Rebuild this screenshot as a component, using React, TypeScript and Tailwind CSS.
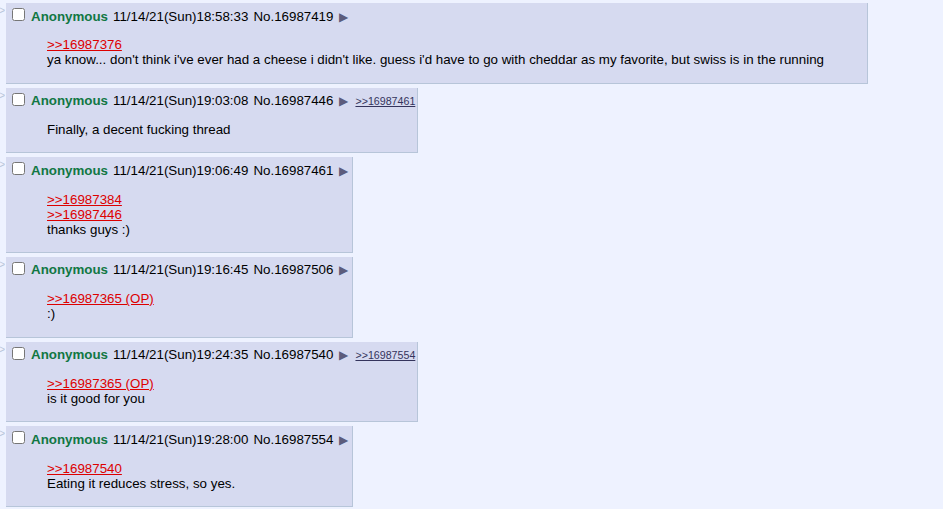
import React from 'react';

type Post = {
    time: string;
    no: string;
    backlinks?: string[];
    quotes: string[];
    lines: string[];
};

const posts: Post[] = [
    {
        time: '11/14/21(Sun)18:58:33',
        no: '16987419',
        quotes: ['>>16987376'],
        lines: ["ya know... don't think i've ever had a cheese i didn't like. guess i'd have to go with cheddar as my favorite, but swiss is in the running"],
    },
    {
        time: '11/14/21(Sun)19:03:08',
        no: '16987446',
        backlinks: ['>>16987461'],
        quotes: [],
        lines: ['Finally, a decent fucking thread'],
    },
    {
        time: '11/14/21(Sun)19:06:49',
        no: '16987461',
        quotes: ['>>16987384', '>>16987446'],
        lines: ['thanks guys :)'],
    },
    {
        time: '11/14/21(Sun)19:16:45',
        no: '16987506',
        quotes: ['>>16987365 (OP)'],
        lines: [':)'],
    },
    {
        time: '11/14/21(Sun)19:24:35',
        no: '16987540',
        backlinks: ['>>16987554'],
        quotes: ['>>16987365 (OP)'],
        lines: ['is it good for you'],
    },
    {
        time: '11/14/21(Sun)19:28:00',
        no: '16987554',
        quotes: ['>>16987540'],
        lines: ['Eating it reduces stress, so yes.'],
    },
];

function Reply({ post }: { post: Post }) {
    return (
        <div className="flex items-start">
            <div className="flex w-[5px] shrink-0 justify-end overflow-hidden pt-[3px] text-[10px] leading-none text-[#B7C5D9]">
                <span>&gt;&gt;</span>
            </div>
            <div className="ml-[1px] border-r border-b border-[#B7C5D9] bg-[#D6DAF0] py-[2px] pr-[2px]">
                <div className="flex h-[19px] items-center whitespace-nowrap">
                    <input type="checkbox" className="mt-0 mr-[6px] ml-[6px] h-[13px] w-[13px]" />
                    <div className="flex items-center pt-[4px]">
                        <span className="font-bold text-[#117743]">Anonymous</span>
                        <span className="ml-[5px]">{post.time}</span>
                        <span className="ml-[5px]">No.{post.no}</span>
                        <span className="mr-[2px] ml-[6px] text-[12px] text-[#5c5c7c]">▶</span>
                        {post.backlinks?.map((b) => (
                            <a key={b} className="ml-[5px] text-[10.67px] text-[#34345C] underline">
                                {b}
                            </a>
                        ))}
                    </div>
                </div>
                <div className="mt-[13.33px] mr-[41px] mb-[13.33px] ml-[41px] leading-[15px]">
                    {post.quotes.map((q) => (
                        <div key={q}>
                            <a className="text-[#DD0000] underline">{q}</a>
                        </div>
                    ))}
                    {post.lines.map((l) => (
                        <div key={l}>{l}</div>
                    ))}
                </div>
            </div>
        </div>
    );
}

export default function App() {
    return (
        <div className="min-h-[509px] bg-[#EEF2FF] pt-[3px] font-['Liberation_Sans',Arial,sans-serif] text-[13.33px] text-black">
            <div className="flex flex-col gap-[4px]">
                {posts.map((p) => (
                    <Reply key={p.no} post={p} />
                ))}
            </div>
        </div>
    );
}
